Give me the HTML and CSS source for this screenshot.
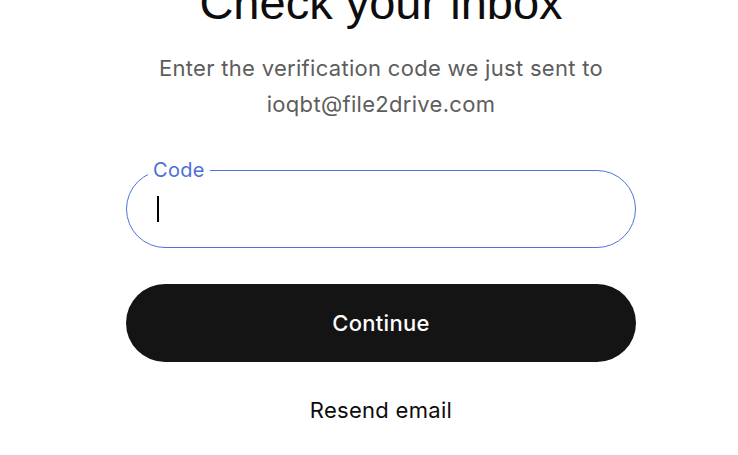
FILE: index.html
```html
<!DOCTYPE html>
<html lang="en">
<head>
<meta charset="utf-8">
<title>Check your inbox</title>
<link rel="stylesheet" href="styles.css">
</head>
<body>
<main class="page">
  <section class="card">
    <h1 class="title">Check your inbox</h1>
    <p class="subtitle">Enter the verification code we just sent to ioqbt@file2drive.com</p>
    <div class="field">
      <span class="field-label">Code</span>
      <span class="caret"></span>
    </div>
    <button class="primary" type="button">Continue</button>
    <a class="link" href="#">Resend email</a>
  </section>
</main>
</body>
</html>
```
FILE: styles.css
```css
html, body {
  margin: 0;
  background: #ffffff;
}

.page {
  display: flex;
  justify-content: center;
  padding-left: 24px;
}

.card {
  width: 510px;
  display: flex;
  flex-direction: column;
  align-items: center;
  font-family: Inter, "Liberation Sans", sans-serif;
  letter-spacing: 0.3px;
}

.title {
  margin: -25px 0 0;
  font-family: "Liberation Sans", Arial, sans-serif;
  font-weight: 400;
  font-size: 47px;
  line-height: 56px;
  letter-spacing: 0;
  color: #0d0d0d;
  white-space: nowrap;
}

.subtitle {
  margin: 19px 0 0;
  width: 480px;
  text-align: center;
  font-size: 22px;
  line-height: 36px;
  color: #5d5d5d;
}

.field {
  position: relative;
  box-sizing: border-box;
  width: 510px;
  height: 78px;
  margin-top: 48px;
  border: 1px solid #4f73db;
  border-radius: 39px;
  display: flex;
  align-items: center;
  padding-left: 30px;
}

.field-label {
  position: absolute;
  top: -13px;
  left: 21px;
  padding: 0 5px;
  background: #ffffff;
  color: #4a6fd8;
  font-size: 20px;
  line-height: 24px;
}

.caret {
  width: 2px;
  height: 26px;
  background: #000000;
}

.primary {
  margin-top: 36px;
  width: 510px;
  height: 78px;
  border: 0;
  border-radius: 39px;
  background: #141414;
  color: #ffffff;
  font-family: inherit;
  font-size: 22px;
  font-weight: 500;
  letter-spacing: 0.3px;
}

.link {
  margin-top: 36px;
  font-size: 22px;
  line-height: 24px;
  color: #0d0d0d;
  text-decoration: none;
}
```
